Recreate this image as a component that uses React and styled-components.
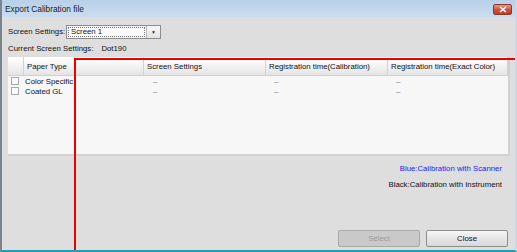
import React from 'react';
import styled, {createGlobalStyle} from 'styled-components';

const GlobalStyle = createGlobalStyle`
  html, body {
    margin: 0;
    padding: 0;
    background: #dedede;
  }
  body {
    font-family: "Liberation Sans", Arial, sans-serif;
    font-size: 7.8px;
    color: #111;
  }
`;

const COLUMNS = [
  {key: 'check', width: 16, label: ''},
  {key: 'paper', width: 51, label: 'Paper Type'},
  {key: 'blank', width: 69, label: ''},
  {key: 'screen', width: 122, label: 'Screen Settings'},
  {key: 'cal', width: 122, label: 'Registration time(Calibration)'},
  {key: 'exact', width: 120, label: 'Registration time(Exact Color)'}
];

const ROWS = [
  {paper: 'Color Specific', screen: '–', cal: '–', exact: '–'},
  {paper: 'Coated GL', screen: '–', cal: '–', exact: '–'}
];

const gridTemplate = COLUMNS.map(c => `${c.width}px`).join(' ');

const Window = styled.div`
  position: relative;
  width: 517px;
  height: 252px;
  box-sizing: border-box;
  display: flex;
  flex-direction: column;
  background: #dedede;
  border-left: 2px solid #7b858e;
  border-right: 2px solid #c9d9ea;
  border-bottom: 2px solid #1fa0b3;
  overflow: hidden;
`;

const TitleBar = styled.div`
  height: 17px;
  flex: none;
  display: flex;
  align-items: center;
  justify-content: space-between;
  padding: 0 3px 0 3px;
  background: linear-gradient(#b9d0e9, #cadcf0);
  font-size: 8.3px;
  color: #1a1a1a;
`;

const CloseButton = styled.div`
  width: 19px;
  height: 11px;
  margin-top: 1px;
  border: 1px solid #8a3a2c;
  border-radius: 2px;
  box-sizing: border-box;
  background: linear-gradient(#e49a88, #c8503a 55%, #b8402c);
  display: flex;
  align-items: center;
  justify-content: center;
`;

const Body = styled.div`
  flex: 1;
  display: flex;
  flex-direction: column;
  padding: 7px 7px 3px 6px;
`;

const SettingsRow = styled.div`
  display: flex;
  align-items: center;
  height: 15px;
`;

const Label = styled.span`
  width: 58px;
  flex: none;
  white-space: nowrap;
`;

const Dropdown = styled.div`
  width: 95px;
  height: 14px;
  box-sizing: border-box;
  display: flex;
  border: 1px solid #8c8c8c;
  background: #f4f4f4;
`;

const DropdownValue = styled.div`
  flex: 1;
  margin: 1px;
  padding-left: 2px;
  display: flex;
  align-items: center;
  border: 1px dotted #777;
  background: #fdfdfd;
`;

const DropdownArrow = styled.div`
  width: 13px;
  display: flex;
  align-items: center;
  justify-content: center;
  border-left: 1px solid #b8b8b8;
  background: linear-gradient(#f8f8f8, #e2e2e2);
  font-size: 5px;
  color: #333;
`;

const InfoRow = styled.div`
  display: flex;
  gap: 8px;
  margin-top: 3px;
  height: 12px;
  align-items: center;
`;

const Table = styled.div`
  margin-top: 3px;
  width: 502px;
  height: 99px;
  box-sizing: border-box;
  background: #f7f7f7;
  border-right: 2px solid #d0d0d0;
  border-bottom: 2px solid #d2d2d2;
`;

const HeaderRow = styled.div`
  display: grid;
  grid-template-columns: ${gridTemplate};
  height: 18px;
  background: linear-gradient(#ffffff, #f0f0f0 60%, #e4e4e4);
  border-bottom: 1px solid #d0d0d0;
`;

const HeaderCell = styled.div`
  display: flex;
  align-items: center;
  padding-left: 3px;
  border-right: 1px solid #d2d2d2;
  white-space: nowrap;
  overflow: hidden;
`;

const DataRow = styled.div`
  display: grid;
  grid-template-columns: ${gridTemplate};
  height: 10px;
`;

const Cell = styled.div`
  display: flex;
  align-items: center;
  padding-left: ${p => p.$indent || 0}px;
  white-space: nowrap;
  color: ${p => (p.$dash ? '#777' : '#111')};
`;

const CheckBox = styled.div`
  width: 8px;
  height: 8px;
  box-sizing: border-box;
  margin-left: 3px;
  border: 1px solid #a8a8a8;
  background: #fbfbfb;
`;

const Legend = styled.div`
  display: flex;
  flex-direction: column;
  align-items: flex-end;
  gap: 7px;
  margin-top: 8px;
  padding-right: 6px;
`;

const LegendText = styled.span`
  color: ${p => p.$color};
`;

const Footer = styled.div`
  margin-top: auto;
  display: flex;
  justify-content: flex-end;
  gap: 6px;
`;

const Button = styled.div`
  width: 82px;
  height: 17px;
  box-sizing: border-box;
  border: 1px solid ${p => (p.$disabled ? '#a9a9a9' : '#8e8e8e')};
  border-radius: 2px;
  display: flex;
  align-items: center;
  justify-content: center;
  color: ${p => (p.$disabled ? '#9c9c9c' : '#111')};
  background: ${p =>
    p.$disabled ? '#c9c9c9' : 'linear-gradient(#f6f6f6, #e6e6e6 50%, #d8d8d8)'};
`;

const Highlight = styled.div`
  position: absolute;
  background: #ee0000;
  ${p => (p.$horizontal
    ? 'left: 72px; top: 58px; right: 0; height: 2px;'
    : 'left: 72px; top: 58px; bottom: 0; width: 2px;')}
`;

export default function App() {
  return (
    <>
      <GlobalStyle />
      <Window>
        <TitleBar>
          <span>Export Calibration file</span>
          <CloseButton>
            <svg width="8" height="7" viewBox="0 0 8 7">
              <path d="M1 1 L7 6 M7 1 L1 6" stroke="#fff" strokeWidth="1.6" />
            </svg>
          </CloseButton>
        </TitleBar>
        <Body>
          <SettingsRow>
            <Label>Screen Settings:</Label>
            <Dropdown>
              <DropdownValue>Screen 1</DropdownValue>
              <DropdownArrow>▼</DropdownArrow>
            </Dropdown>
          </SettingsRow>
          <InfoRow>
            <span>Current Screen Settings:</span>
            <span>Dot190</span>
          </InfoRow>
          <Table>
            <HeaderRow>
              {COLUMNS.map(col => (
                <HeaderCell key={col.key}>{col.label}</HeaderCell>
              ))}
            </HeaderRow>
            {ROWS.map(row => (
              <DataRow key={row.paper}>
                <Cell><CheckBox /></Cell>
                <Cell $indent={1}>{row.paper}</Cell>
                <Cell />
                <Cell $indent={9} $dash>{row.screen}</Cell>
                <Cell $indent={8} $dash>{row.cal}</Cell>
                <Cell $indent={8} $dash>{row.exact}</Cell>
              </DataRow>
            ))}
          </Table>
          <Legend>
            <LegendText $color="#2020ff">Blue:Calibration with Scanner</LegendText>
            <LegendText $color="#111">Black:Calibration with Instrument</LegendText>
          </Legend>
          <Footer>
            <Button $disabled>Select</Button>
            <Button>Close</Button>
          </Footer>
        </Body>
        <Highlight $horizontal />
        <Highlight />
      </Window>
    </>
  );
}
